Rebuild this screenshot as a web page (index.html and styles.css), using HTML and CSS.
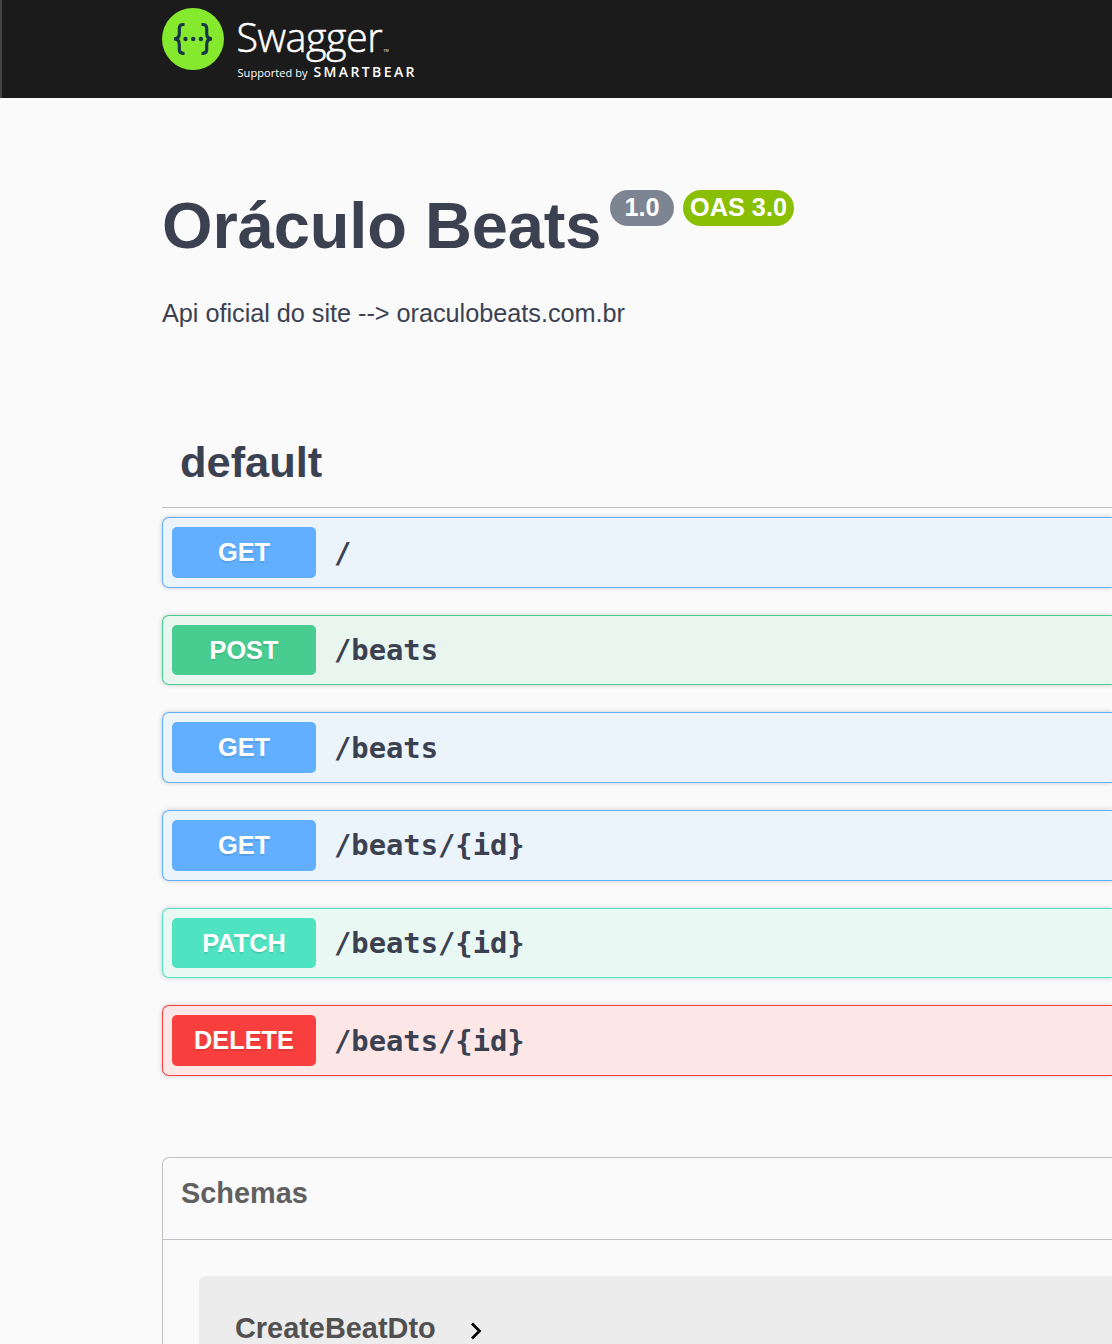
FILE: index.html
```html
<!DOCTYPE html>
<html lang="pt-BR">
<head>
<meta charset="utf-8">
<title>Oráculo Beats</title>
<link rel="stylesheet" href="styles.css">
</head>
<body>
<header class="topbar">
  <svg class="logo" width="260" height="98" viewBox="162 0 260 98" role="img" aria-label="Swagger">
    <circle cx="193" cy="39" r="31" fill="#85ea2d"/>
    <g fill="none" stroke="#173647" stroke-width="3.2">
      <path d="M184.500 24.500H183Q179.300 24.500 179.300 28.500V33.500Q179.300 38.900 174 38.900Q179.300 38.900 179.300 44.300V49.300Q179.300 53.300 183 53.300H184.500"/>
      <path d="M201.500 24.500H203Q206.700 24.500 206.700 28.500V33.500Q206.700 38.900 212 38.900Q206.700 38.900 206.700 44.300V49.300Q206.700 53.300 203 53.300H201.500"/>
    </g>
    <g fill="#173647"><circle cx="185.500" cy="39" r="2.200"/><circle cx="193.200" cy="39" r="2.200"/><circle cx="200.900" cy="39" r="2.200"/></g>
    <text class="logo-name" x="236.500" y="52" textLength="146">Swagger</text>
    <text class="logo-tm" x="383.500" y="51.500">TM</text>
    <text class="logo-by" x="237.500" y="77" textLength="70">Supported by</text>
    <text class="logo-brand" x="313.500" y="77" textLength="101">SMARTBEAR</text>
  </svg>
</header>
<main class="page">
  <div class="heading">
    <h1 class="title">Oráculo Beats</h1>
    <span class="pill version">1.0</span>
    <span class="pill oas">OAS 3.0</span>
  </div>
  <p class="description">Api oficial do site --&gt; oraculobeats.com.br</p>
  <h2 class="tag">default</h2>
  <div class="operations">
    <div class="op get"><span class="method">GET</span><span class="path">/</span></div>
    <div class="op post"><span class="method">POST</span><span class="path">/beats</span></div>
    <div class="op get"><span class="method">GET</span><span class="path">/beats</span></div>
    <div class="op get"><span class="method">GET</span><span class="path">/beats/{id}</span></div>
    <div class="op patch"><span class="method">PATCH</span><span class="path">/beats/{id}</span></div>
    <div class="op delete"><span class="method">DELETE</span><span class="path">/beats/{id}</span></div>
  </div>
  <section class="schemas">
    <h3 class="schemas-title">Schemas</h3>
    <div class="model">
      <span>CreateBeatDto</span>
      <svg class="chevron" width="14" height="20" viewBox="0 0 14 20"><path d="M2 2.500L9.500 10L2 17.500" fill="none" stroke="#000" stroke-width="2.700"/></svg>
    </div>
  </section>
</main>
</body>
</html>
```
FILE: styles.css
```css
* { box-sizing: border-box; }
body {
  margin: 0;
  background: #fafafa;
  color: #3b4151;
  font-family: "Liberation Sans", Arial, sans-serif;
}
h1, h2, h3, p { margin: 0; }
.topbar {
  height: 98px;
  padding-left: 160px;
  background: #1b1b1b;
  border-left: 2px solid #444;
}
.logo { display: block; }
.logo text { fill: #fff; font-family: "Open Sans", sans-serif; }
.logo .logo-name { font-size: 39.5px; font-weight: 300; stroke: #fff; stroke-width: .5px; }
.logo .logo-tm { font-size: 3.5px; }
.logo .logo-by { font-size: 11px; }
.logo .logo-brand { font-size: 14px; font-weight: 600; }
.page {
  display: flex;
  flex-direction: column;
  height: 1246px;
  padding: 92px 0 0 162px;
}
.heading { display: flex; height: 72px; white-space: nowrap; }
.title { font-size: 65px; line-height: 72px; margin-right: 8px; width: 440px; letter-spacing: -.1px; }
.pill {
  height: 36px;
  border-radius: 18px;
  color: #fff;
  font-size: 25.3px;
  font-weight: 700;
  line-height: 35px;
  text-align: center;
}
.version { width: 64px; background: #7d8492; }
.oas { width: 111px; margin-left: 9px; background: #89bf04; }
.description { margin-top: 33px; font-size: 25.3px; line-height: 36px; letter-spacing: -.04px; }
.tag {
  margin-top: 106px;
  padding: 0 0 20px 18px;
  height: 71px;
  border-bottom: 1px solid #bfc0c3;
  font-size: 43.4px;
  line-height: 50px;
}
.operations {
  display: flex;
  flex-direction: column;
  gap: 27.05px;
  padding-top: 9.1px;
}
.op {
  display: flex;
  align-items: center;
  height: 70.6px;
  padding-left: 9px;
  border: 1px solid;
  border-right: 0;
  border-radius: 7px 0 0 7px;
  box-shadow: 0 0 5px rgba(0, 0, 0, .19);
}
.method {
  width: 144px;
  height: 50.6px;
  border-radius: 5px;
  color: #fff;
  font-size: 25.3px;
  font-weight: 700;
  line-height: 50.5px;
  text-align: center;
  text-shadow: 0 2px 0 rgba(0, 0, 0, .1);
}
.path {
  margin-left: 18px;
  padding-top: .3px;
  font: 700 28.8px "DejaVu Sans Mono", monospace;
}
.get { background: #ebf3fb; border-color: #61affe; }
.get .method { background: #61affe; }
.post { background: #e9f6f0; border-color: #49cc90; }
.post .method { background: #49cc90; }
.patch { background: #e9f8f3; border-color: #50e3c2; }
.patch .method { background: #50e3c2; }
.delete { background: #fce7e6; border-color: #f93e3e; }
.delete .method { background: #f93e3e; }
.schemas {
  flex: 1;
  min-height: 0;
  margin-top: 81px;
  overflow: hidden;
  border: 1px solid #bfc0c3;
  border-width: 1px 0 0 1px;
  border-radius: 7px 0 0 0;
}
.schemas-title {
  height: 82px;
  padding: 18px 0 0 18px;
  border-bottom: 1px solid #bfc0c3;
  color: #606060;
  font-size: 28.9px;
  line-height: 34px;
}
.model {
  display: flex;
  align-items: flex-start;
  margin: 36px 0 0 36px;
  padding: 35px 0 0 36px;
  height: 68px;
  border-radius: 7px 0 0 0;
  background: #ececec;
  color: #505050;
  font-size: 28.9px;
  font-weight: 700;
  line-height: 34px;
}
.chevron { margin: 10px 0 0 34px; }
```
